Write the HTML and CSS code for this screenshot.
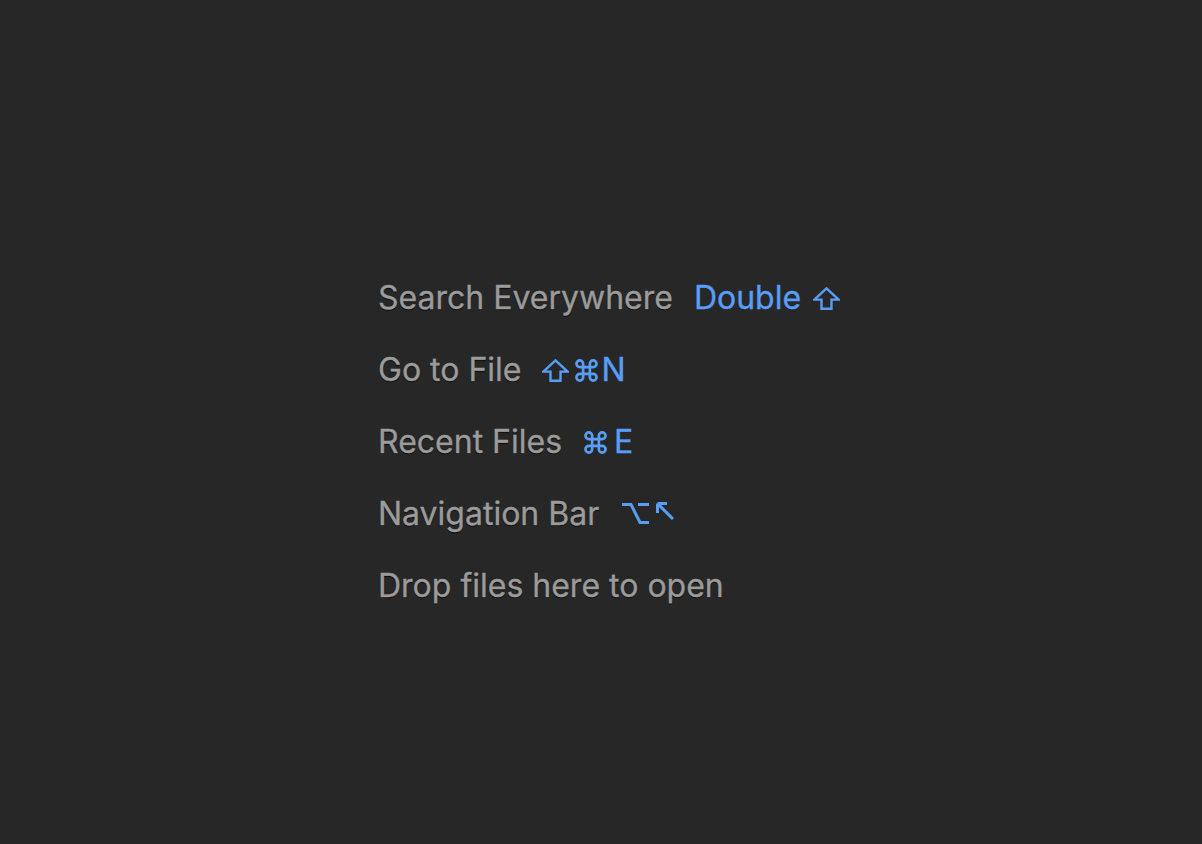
FILE: index.html
```html
<!DOCTYPE html>
<html>
<head>
<meta charset="utf-8">
<link rel="stylesheet" href="styles.css">
</head>
<body>
<div class="hints">
  <div class="row"><span class="label">Search Everywhere</span><span class="key"><span class="word">Double</span><svg class="ico shift" viewBox="0 0 27 23"><path d="M13.5 1.4 L25.6 12.6 L18.5 12.6 L18.5 21.8 L8.5 21.8 L8.5 12.6 L1.4 12.6 Z"/></svg></span></div>
  <div class="row"><span class="label">Go to File</span><span class="key"><svg class="ico shift" viewBox="0 0 27 23"><path d="M13.5 1.4 L25.6 12.6 L18.5 12.6 L18.5 21.8 L8.5 21.8 L8.5 12.6 L1.4 12.6 Z"/></svg><svg class="ico cmd" viewBox="1.7 1.7 20.6 20.6"><path d="M18 3a3 3 0 0 0-3 3v12a3 3 0 0 0 3 3 3 3 0 0 0 3-3 3 3 0 0 0-3-3H6a3 3 0 0 0-3 3 3 3 0 0 0 3 3 3 3 0 0 0 3-3V6a3 3 0 0 0-3-3 3 3 0 0 0-3 3 3 3 0 0 0 3 3h12a3 3 0 0 0 3-3 3 3 0 0 0-3-3z"/></svg><span class="letter n">N</span></span></div>
  <div class="row"><span class="label">Recent Files</span><span class="key"><svg class="ico cmd" viewBox="1.7 1.7 20.6 20.6"><path d="M18 3a3 3 0 0 0-3 3v12a3 3 0 0 0 3 3 3 3 0 0 0 3-3 3 3 0 0 0-3-3H6a3 3 0 0 0-3 3 3 3 0 0 0 3 3 3 3 0 0 0 3-3V6a3 3 0 0 0-3-3 3 3 0 0 0-3 3 3 3 0 0 0 3 3h12a3 3 0 0 0 3-3 3 3 0 0 0-3-3z"/></svg><span class="letter e">E</span></span></div>
  <div class="row"><span class="label">Navigation Bar</span><span class="key"><svg class="ico opt" viewBox="0 0 27 23"><path d="M0 2.5 H9 L18 20.5 H27 M16 2.5 H27"/></svg><svg class="ico nw" viewBox="0 0 18 18"><path d="M1.5 1.5 L17 17 M1.5 1.5 H11 M1.5 1.5 V11"/></svg></span></div>
  <div class="row"><span class="label">Drop files here to open</span></div>
</div>
</body>
</html>
```
FILE: styles.css
```css
html, body {
  margin: 0;
  padding: 0;
  background: #272727;
  height: 100%;
}
body {
  font-family: Inter, "Noto Sans", sans-serif;
  font-size: 32px;
  -webkit-text-stroke: 0.35px currentColor;
}
.hints {
  display: flex;
  flex-direction: column;
  padding: 261px 0 0 378px;
}
.row {
  display: flex;
  align-items: center;
  height: 72px;
  gap: 21px;
}
.label {
  color: #9b9b9b;
  text-shadow: 0 1px 1px rgba(0,0,0,0.8);
}
.key {
  color: #589df6;
  display: flex;
  align-items: center;
}
.word { margin-right: 12px; }
.ico {
  fill: none;
  stroke: #589df6;
  stroke-width: 2.4;
  stroke-linejoin: miter;
}
.shift { width: 27px; height: 23px; margin-top: 2px; }
.cmd { width: 25px; height: 23px; stroke-width: 2.4; margin-top: 2px; }
.shift + .cmd { margin-left: 5px; }
.letter.n { margin-left: 2px; }
.letter.e { margin-left: 6px; }
.opt { width: 27px; height: 23px; stroke-width: 3; margin-left: 2px; }
.nw { width: 18px; height: 18px; stroke-width: 3; margin-left: 7px; margin-bottom: 5px; }
```
